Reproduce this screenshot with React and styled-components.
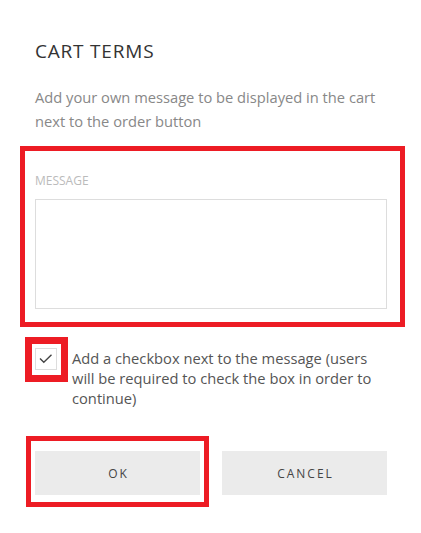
import React from "react";
import styled, { createGlobalStyle } from "styled-components";

const Global = createGlobalStyle`
  html, body { margin: 0; padding: 0; background: #fff; }
  body { font-family: "Open Sans", "Noto Sans", sans-serif; }
  * { box-sizing: border-box; }
`;

const Page = styled.div`
  width: 352px;
  min-height: 533px;
  margin-left: 35px;
  padding: 38px 0 38px;
  display: flex;
  flex-direction: column;
`;

const Title = styled.h2`
  margin: 0;
  font-size: 19px;
  line-height: 26px;
  font-weight: 400;
  letter-spacing: 0.8px;
  color: #333;
`;

const Description = styled.p`
  margin: 21px 0 0;
  font-size: 14.7px;
  line-height: 24px;
  color: #888;
`;

const Field = styled.div`
  position: relative;
  margin-top: 40px;
  display: flex;
  flex-direction: column;
  gap: 10px;
`;

const Label = styled.label`
  font-size: 12px;
  line-height: 16px;
  color: #bbb;
`;

const TextArea = styled.textarea`
  width: 100%;
  height: 110px;
  border: 1px solid #ddd;
  resize: none;
  outline: none;
  font-family: inherit;
  margin: 0;
  display: block;
`;

const CheckRow = styled.div`
  margin-top: 39px;
  display: flex;
  align-items: flex-start;
  gap: 15px;
`;

const Box = styled.span`
  position: relative;
  flex: 0 0 22px;
  width: 22px;
  height: 22px;
  border: 1px solid #ddd;
  display: flex;
  align-items: center;
  justify-content: center;
`;

const CheckText = styled.span`
  font-size: 14.7px;
  line-height: 20px;
  color: #555;
`;

const Buttons = styled.div`
  margin-top: 43px;
  display: flex;
  gap: 22px;
`;

const ButtonWrap = styled.div`
  position: relative;
  flex: 1;
  display: flex;
`;

const Button = styled.button`
  flex: 1;
  height: 44px;
  border: none;
  background: #ebebeb;
  font-family: inherit;
  font-size: 12px;
  letter-spacing: 2px;
  color: #444;
  padding: 0 0 0 2px;
  cursor: pointer;
`;

const Highlight = styled.span`
  position: absolute;
  top: ${(p) => p.$t}px;
  right: ${(p) => p.$r}px;
  bottom: ${(p) => p.$b}px;
  left: ${(p) => p.$l}px;
  border: ${(p) => p.$w}px solid #ed1c24;
  pointer-events: none;
`;

export default function App() {
  return (
    <>
      <Global />
      <Page>
        <Title>CART TERMS</Title>
        <Description>
          Add your own message to be displayed in the cart next to the order button
        </Description>
        <Field>
          <Label>MESSAGE</Label>
          <TextArea />
          <Highlight $t={-27} $r={-18} $b={-18} $l={-15} $w={5} />
        </Field>
        <CheckRow>
          <Box>
            <svg width="14" height="10" viewBox="0 0 14 10">
              <polyline
                points="1,4.5 4.8,8.3 12.5,0.8"
                fill="none"
                stroke="#444"
                strokeWidth="1.4"
              />
            </svg>
            <Highlight $t={-12} $r={-12} $b={-13} $l={-11} $w={7} />
          </Box>
          <CheckText>
            Add a checkbox next to the message (users will be required to check the box in order to continue)
          </CheckText>
        </CheckRow>
        <Buttons>
          <ButtonWrap>
            <Button>OK</Button>
            <Highlight $t={-15} $r={-9} $b={-12} $l={-9} $w={5} />
          </ButtonWrap>
          <ButtonWrap>
            <Button>CANCEL</Button>
          </ButtonWrap>
        </Buttons>
      </Page>
    </>
  );
}
